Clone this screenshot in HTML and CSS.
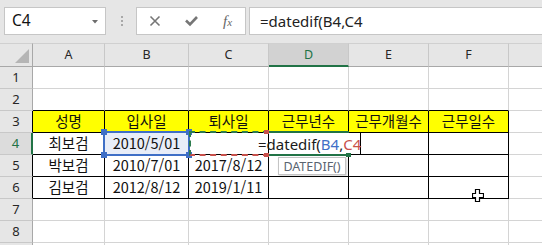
FILE: index.html
```html
<!DOCTYPE html>
<html lang="ko">
<head>
<meta charset="utf-8">
<link rel="stylesheet" href="styles.css">
</head>
<body>
<div class="app">
  <div class="toolbar">
    <div class="namebox">
      <span class="namebox-text">C4</span>
      <svg class="dd" width="6" height="4" viewBox="0 0 6 4"><path d="M0 0H6L3 3.5Z" fill="#6d6d6d"/></svg>
    </div>
    <div class="grip"><i></i><i></i><i></i></div>
    <div class="fnbox">
      <svg class="ic" width="12" height="12" viewBox="0 0 12 12"><path d="M1.5 1.5L10.5 10.5M10.5 1.5L1.5 10.5" stroke="#767676" stroke-width="1.6"/></svg>
      <svg class="ic" width="13" height="12" viewBox="0 0 13 12"><path d="M1 5.5L5 9.5L12 2" stroke="#767676" stroke-width="2.6" fill="none"/></svg>
      <span class="fx">f<span class="fx-x">x</span></span>
    </div>
    <div class="formula">=datedif(B4,C4</div>
  </div>

  <div class="sheet">
    <div class="c corner"><span class="tri"></span></div>
    <div class="c ch">A</div>
    <div class="c ch">B</div>
    <div class="c ch">C</div>
    <div class="c ch sel">D</div>
    <div class="c ch">E</div>
    <div class="c ch">F</div>
    <div class="c ch">G</div>

    <div class="c rh">1</div><div class="c"></div><div class="c"></div><div class="c"></div><div class="c"></div><div class="c"></div><div class="c"></div><div class="c"></div>
    <div class="c rh">2</div><div class="c above"></div><div class="c above"></div><div class="c above"></div><div class="c above"></div><div class="c above"></div><div class="c above"></div><div class="c"></div>

    <div class="c rh tl">3</div>
    <div class="c t y">성명</div>
    <div class="c t y">입사일</div>
    <div class="c t y">퇴사일</div>
    <div class="c t y">근무년수</div>
    <div class="c t y">근무개월수</div>
    <div class="c t y">근무일수</div>
    <div class="c"></div>

    <div class="c rh rsel">4</div>
    <div class="c t">최보검</div>
    <div class="c t bsel">2010/5/01</div>
    <div class="c t"></div>
    <div class="c t"></div>
    <div class="c t"></div>
    <div class="c t"></div>
    <div class="c"></div>

    <div class="c rh tl">5</div>
    <div class="c t">박보검</div>
    <div class="c t">2010/7/01</div>
    <div class="c t">2017/8/12</div>
    <div class="c t"></div>
    <div class="c t"></div>
    <div class="c t"></div>
    <div class="c"></div>

    <div class="c rh tl">6</div>
    <div class="c t">김보검</div>
    <div class="c t">2012/8/12</div>
    <div class="c t">2019/1/11</div>
    <div class="c t"></div>
    <div class="c t"></div>
    <div class="c t"></div>
    <div class="c"></div>

    <div class="c rh">7</div><div class="c"></div><div class="c"></div><div class="c"></div><div class="c"></div><div class="c"></div><div class="c"></div><div class="c"></div>
    <div class="c rh">8</div><div class="c"></div><div class="c"></div><div class="c"></div><div class="c"></div><div class="c"></div><div class="c"></div><div class="c"></div>
    <div class="c rh"></div><div class="c"></div><div class="c"></div><div class="c"></div><div class="c"></div><div class="c"></div><div class="c"></div><div class="c"></div>
  </div>

  <!-- overlays -->
  <div class="ref-b4"><i class="h h1"></i><i class="h h2"></i><i class="h h3"></i><i class="h h4"></i></div>
  <div class="ref-c4"><i class="rh1"></i><i class="rh2"></i></div>
  <div class="edit-box"></div>
  <div class="edit-line"></div>
  <div class="edit-text">=datedif(<span class="rb">B4</span>,<span class="rr">C4</span></div>
  <i class="gh"></i>
  <div class="tip">DATEDIF()</div>
  <svg class="cursor" width="12" height="14" viewBox="0 0 12 14"><path d="M3.5 0.5H7.5V4.5H11.5V8.5H7.5V12.5H3.5V8.5H0.5V4.5H3.5Z" fill="#fff" stroke="#000" stroke-width="1.2"/></svg>
</div>
</body>
</html>
```

FILE: styles.css
```css
* { box-sizing: border-box; }
html, body { margin: 0; padding: 0; }
body { width: 542px; height: 245px; overflow: hidden; background: #fff; font-family: "Noto Sans", "Noto Sans CJK KR", sans-serif; }

.app { position: relative; width: 542px; height: 245px; overflow: hidden; }

.toolbar {
  height: 43px;
  background: #e6e6e6;
  display: flex;
  align-items: flex-start;
  padding-top: 7px;
  padding-left: 4px;
}
.namebox {
  width: 102px; height: 28px;
  background: #fff;
  border: 1px solid #c6c6c6;
  display: flex; align-items: center; justify-content: space-between;
  padding: 0 7px 0 7px;
}
.namebox-text { font-size: 15.5px; color: #111; line-height: 1; }
.dd { margin-top: 1px; }
.grip {
  width: 30px; height: 28px;
  display: flex; flex-direction: column; align-items: center; justify-content: center; gap: 2px;
  padding-left: 1px;
}
.grip i { display: block; width: 2px; height: 2px; background: #a8a8a8; }
.fnbox {
  width: 110px; height: 28px;
  background: #fff; border: 1px solid #c6c6c6;
  display: flex; align-items: center;
  padding-left: 12px; gap: 24px;
}
.fx { font-family: "Liberation Serif", serif; font-style: italic; font-size: 15px; color: #666; margin-left: 1px; }
.fx-x { font-size: 11px; }
.formula {
  flex: 1;
  margin-left: 3px; margin-right: -4px;
  height: 28px;
  background: #fff; border: 1px solid #c6c6c6;
  font-size: 15px; color: #222;
  display: flex; align-items: center;
  padding-left: 10px;
}

.sheet {
  display: grid;
  grid-template-columns: 33px 72px 84px 80px 80px 80px 80px 80px;
  grid-template-rows: 24px repeat(9, 22px);
}
.c {
  border-right: 1px solid #d4d4d4;
  border-bottom: 1px solid #d4d4d4;
  display: flex; align-items: center; justify-content: center;
  font-family: "Noto Sans CJK KR", sans-serif;
  font-size: 14.5px;
  color: #111;
  line-height: 1;
  overflow: hidden;
  white-space: nowrap;
}
.corner, .ch {
  background: #e6e6e6;
  border-right: 1px solid #c8c8c8;
  border-bottom: 1px solid #a8a8a8;
  border-top: 1px solid #d0d0d0;
}
.corner { position: relative; border-right-color: #a8a8a8; }
.tri {
  position: absolute; left: 15px; top: 5px;
  width: 0; height: 0;
  border-left: 14px solid transparent;
  border-bottom: 14px solid #b5b5b5;
}
.ch { font-family: "Noto Sans", sans-serif; font-size: 12.5px; color: #262626; padding-top: 1px; }
.ch.sel { background: #d2d2d2; color: #217346; border-bottom: 2px solid #217346; }
.rh {
  background: #e6e6e6;
  border-right: 1px solid #a8a8a8;
  border-bottom: 1px solid #c8c8c8;
  font-family: "Noto Sans", sans-serif; font-size: 13px; color: #262626;
}
.rh.tl { border-right-color: #000; }
.rh.rsel { background: #dcdcdc; color: #217346; border-right: 2px solid #217346; }
.above { border-bottom-color: #000; }
.t { border-right-color: #000; border-bottom-color: #000; }
.y { background: #ffff00; }
.bsel { background: #e8edf8; }

/* overlays */
.ref-b4 {
  position: absolute; left: 103px; top: 131px; width: 87px; height: 25px;
  border: 2px solid #3f6fc6;
}
.h { position: absolute; width: 6px; height: 6px; background: #3f6fc6; }
.h1 { left: -4px; top: -4px; }
.h2 { right: -4px; top: -4px; }
.h3 { left: -4px; bottom: -4px; }
.h4 { right: -4px; bottom: -4px; }

.ref-c4 {
  position: absolute; left: 189px; top: 131px; width: 80px; height: 25px;
  border-top: 2px dashed #2e7d4f;
  border-left: 2px dashed #2e7d4f;
  border-bottom: 2px dashed #c8504b;
}
.rh1, .rh2 { position: absolute; width: 5px; height: 4px; background: #c8504b; right: 0; }
.rh1 { top: -3px; }
.rh2 { bottom: -3px; }

.edit-box {
  position: absolute; left: 269px; top: 131px; width: 80px; height: 25px;
  border-top: 2px solid #217346; border-bottom: 2px solid #217346;
  background: #fff;
}
.edit-line { position: absolute; left: 349px; top: 133px; width: 12px; height: 21px; background: #fff; border-right: 1px solid #000; }
.gh { position: absolute; left: 346px; top: 153px; width: 5px; height: 4px; background: #217346; }
.edit-text {
  position: absolute; left: 258px; top: 133px; height: 21px;
  display: flex; align-items: center;
  font-size: 15px; color: #1a1a1a;
  white-space: nowrap;
}
.rb { color: #3f6fc6; }
.rr { color: #c8504b; }

.tip {
  position: absolute; left: 278px; top: 157px; width: 68px; height: 18px;
  background: #fff; border: 1px solid #c4c4c4;
  box-shadow: 1px 1px 2px rgba(0,0,0,0.18);
  font-size: 12.5px; color: #5a6470;
  display: flex; align-items: center; justify-content: center;
}
.cursor { position: absolute; left: 472px; top: 189px; }
```
